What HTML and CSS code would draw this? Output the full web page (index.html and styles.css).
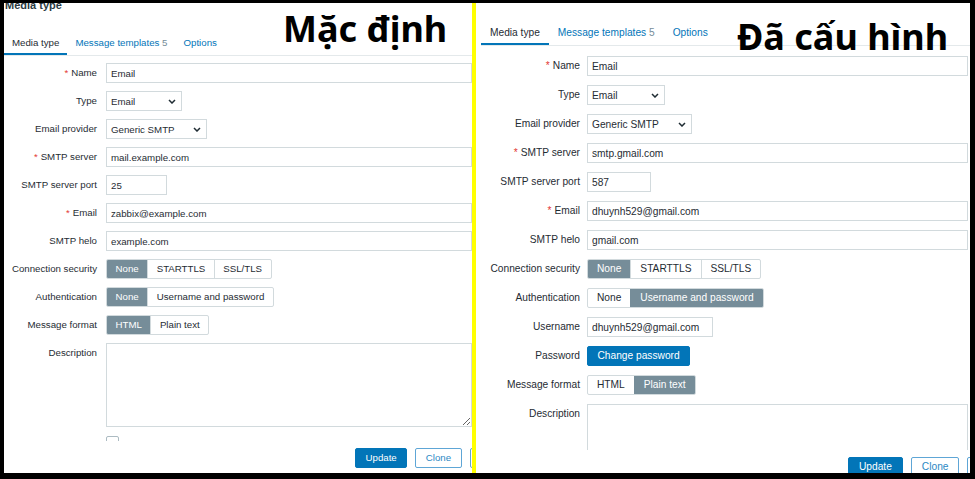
FILE: index.html
```html
<!DOCTYPE html>
<html lang="vi">
<head>
<meta charset="utf-8">
<title>Media type</title>
<link rel="stylesheet" href="styles.css">
</head>
<body>
<div class="frame">
  <section class="panel panel-left">
    <div class="scroll">
      <h1 class="page-title">Media type</h1>
      <ul class="tabs">
        <li class="tab active">Media type</li>
        <li class="tab">Message templates <span class="count">5</span></li>
        <li class="tab">Options</li>
      </ul>
      <div class="form">
        <label class="lbl req">Name</label>
        <input class="input wide" type="text" value="Email">
        <label class="lbl">Type</label>
        <div class="select sel-type"><span>Email</span><svg width="8" height="5" viewBox="0 0 8 5"><path d="M1 1l3 3 3-3" fill="none" stroke="#1f2c33" stroke-width="1.5"/></svg></div>
        <label class="lbl">Email provider</label>
        <div class="select sel-prov"><span>Generic SMTP</span><svg width="8" height="5" viewBox="0 0 8 5"><path d="M1 1l3 3 3-3" fill="none" stroke="#1f2c33" stroke-width="1.5"/></svg></div>
        <label class="lbl req">SMTP server</label>
        <input class="input wide" type="text" value="mail.example.com">
        <label class="lbl">SMTP server port</label>
        <input class="input port" type="text" value="25">
        <label class="lbl req">Email</label>
        <input class="input wide" type="text" value="zabbix@example.com">
        <label class="lbl">SMTP helo</label>
        <input class="input wide" type="text" value="example.com">
        <label class="lbl">Connection security</label>
        <div class="seg"><span class="on">None</span><span>STARTTLS</span><span>SSL/TLS</span></div>
        <label class="lbl">Authentication</label>
        <div class="seg"><span class="on">None</span><span>Username and password</span></div>
        <label class="lbl">Message format</label>
        <div class="seg"><span class="on">HTML</span><span>Plain text</span></div>
        <label class="lbl">Description</label>
        <textarea class="textarea"></textarea>
        <label class="lbl lbl-cb">Enabled</label>
        <span class="checkbox"></span>
      </div>
    </div>
    <div class="footer">
      <button class="btn">Update</button>
      <button class="btn btn-alt">Clone</button>
      <button class="btn btn-alt">Delete</button>
    </div>
    <div class="annot">Mặc định</div>
  </section>
  <div class="divider"></div>
  <section class="panel panel-right">
    <div class="scroll">
      <ul class="tabs">
        <li class="tab active">Media type</li>
        <li class="tab">Message templates <span class="count">5</span></li>
        <li class="tab">Options</li>
      </ul>
      <div class="form">
        <label class="lbl req">Name</label>
        <input class="input wide" type="text" value="Email">
        <label class="lbl">Type</label>
        <div class="select sel-type"><span>Email</span><svg width="8" height="5" viewBox="0 0 8 5"><path d="M1 1l3 3 3-3" fill="none" stroke="#1f2c33" stroke-width="1.5"/></svg></div>
        <label class="lbl">Email provider</label>
        <div class="select sel-prov"><span>Generic SMTP</span><svg width="8" height="5" viewBox="0 0 8 5"><path d="M1 1l3 3 3-3" fill="none" stroke="#1f2c33" stroke-width="1.5"/></svg></div>
        <label class="lbl req">SMTP server</label>
        <input class="input wide" type="text" value="smtp.gmail.com">
        <label class="lbl">SMTP server port</label>
        <input class="input port" type="text" value="587">
        <label class="lbl req">Email</label>
        <input class="input wide" type="text" value="dhuynh529@gmail.com">
        <label class="lbl">SMTP helo</label>
        <input class="input wide" type="text" value="gmail.com">
        <label class="lbl">Connection security</label>
        <div class="seg"><span class="on">None</span><span>STARTTLS</span><span>SSL/TLS</span></div>
        <label class="lbl">Authentication</label>
        <div class="seg"><span>None</span><span class="on">Username and password</span></div>
        <label class="lbl">Username</label>
        <input class="input user" type="text" value="dhuynh529@gmail.com">
        <label class="lbl">Password</label>
        <button class="btn btn-inline">Change password</button>
        <label class="lbl">Message format</label>
        <div class="seg"><span>HTML</span><span class="on">Plain text</span></div>
        <label class="lbl">Description</label>
        <textarea class="textarea"></textarea>
      </div>
    </div>
    <div class="footer">
      <button class="btn">Update</button>
      <button class="btn btn-alt">Clone</button>
      <button class="btn btn-alt">Delete</button>
    </div>
    <div class="annot">Đã cấu hình</div>
  </section>
</div>
</body>
</html>
```
FILE: styles.css
```css
* { box-sizing: border-box; }
html, body { margin: 0; padding: 0; background: #000; }
body {
  width: 975px;
  height: 479px;
  overflow: hidden;
  font-family: "Liberation Sans", Arial, sans-serif;
  color: #1f2c33;
}
.frame {
  display: flex;
  height: 479px;
  padding: 3px 5px 6px 4px;
}
.divider { flex: none; width: 4px; background: #ffff00; }

.panel {
  position: relative;
  flex: none;
  height: 470px;
  background: #fff;
  overflow: hidden;
  display: flex;
  flex-direction: column;
  font-size: var(--fs);
}
.panel-left {
  width: 468px;
  --fs: 9.7px;
  --tabs-mt: 22px;
  --tabs-ml: 0px;
  --tab-px: 8px;
  --lw: 93px;
  --cg: 9px;
  --rg: 8px;
  --fpt: 7px;
  --wide: 366px;
  --scroll-h: 438px;
  --ft-pl: 351px;
  --sp: 8.5px;
  --bp: 9.5px;
}
.panel-right {
  width: 494px;
  --fs: 10.2px;
  --tabs-mt: 20px;
  --tabs-ml: 5px;
  --tab-px: 9px;
  --lw: 104px;
  --cg: 7px;
  --rg: 9px;
  --fpt: 10px;
  --wide: 381px;
  --scroll-h: 447px;
  --ft-pl: 372px;
  --sp: 9px;
  --bp: 10px;
}

.scroll { flex: none; height: var(--scroll-h); overflow: hidden; }

.page-title {
  margin: -4px 0 0 1px;
  height: 12px;
  font-size: 11px;
  line-height: 12px;
  font-weight: bold;
  color: #2b3a42;
}

.tabs {
  list-style: none;
  display: flex;
  margin: var(--tabs-mt) 0 0 var(--tabs-ml);
  padding: 0;
  border-bottom: 1px solid #e4e9eb;
}
.tab {
  padding: 4px var(--tab-px);
  line-height: 12px;
  border-bottom: 2px solid transparent;
  color: #0275b8;
  white-space: nowrap;
}
.tab.active { color: #1f2c33; border-bottom-color: #0275b8; }
.count { color: #768d99; }

.form {
  display: grid;
  grid-template-columns: var(--lw) max-content;
  column-gap: var(--cg);
  row-gap: var(--rg);
  align-items: start;
  justify-items: start;
  padding-top: var(--fpt);
}
.lbl {
  justify-self: end;
  text-align: right;
  line-height: 20px;
  white-space: nowrap;
}
.lbl-cb { line-height: 14px; margin-top: 3px; }
.req::before { content: "*"; color: #e33734; margin-right: 3px; }

.input {
  display: block;
  height: 20px;
  margin: 0;
  padding: 0 4px;
  border: 1px solid #d2dadd;
  border-radius: 0;
  background: #fff;
  font: inherit;
  color: #1f2c33;
  outline: none;
}
.wide { width: var(--wide); }
.panel-left .port { width: 61px; }
.panel-right .port { width: 64px; }
.user { width: 126px; }

.select {
  display: flex;
  align-items: center;
  justify-content: space-between;
  height: 20px;
  padding: 0 5px 0 4px;
  border: 1px solid #d2dadd;
  background: #fff;
}
.panel-left .sel-type { width: 76px; }
.panel-left .sel-prov { width: 101px; }
.panel-right .sel-type { width: 78px; }
.panel-right .sel-prov { width: 105px; }

.seg {
  display: inline-flex;
  height: 20px;
  border: 1px solid #d2dadd;
  border-radius: 2px;
  overflow: hidden;
}
.seg span {
  padding: 0 var(--sp);
  line-height: 18px;
  border-left: 1px solid #d2dadd;
  white-space: nowrap;
}
.seg span:first-child { border-left: 0; }
.seg .on { background: #768d99; color: #fff; border-color: #768d99; }

.textarea {
  display: block;
  width: var(--wide);
  height: 85px;
  margin: 0;
  padding: 3px 4px;
  border: 1px solid #d2dadd;
  border-radius: 0;
  font: inherit;
  background: #fff;
  resize: both;
  outline: none;
}
.panel-left .textarea { height: 84px; }

.checkbox {
  display: block;
  width: 13px;
  height: 13px;
  margin-top: 1px;
  border: 1px solid #acbbc2;
  border-radius: 2px;
  background: #fff;
}

.btn {
  flex: none;
  height: 20px;
  margin: 0;
  padding: 0 var(--bp);
  border: 1px solid #0275b8;
  border-radius: 2px;
  background: #0275b8;
  color: #fff;
  font: inherit;
  line-height: 18px;
  white-space: nowrap;
}
.btn-alt { background: #fff; color: #2c88c4; border-color: #5ea6d6; }
.btn-inline { padding: 0 9.5px; }

.footer {
  flex: none;
  display: flex;
  gap: 8px;
  padding: 7px 0 0 var(--ft-pl);
}

.annot {
  position: absolute;
  font-family: "Noto Sans", "Open Sans", sans-serif;
  font-weight: 700;
  font-size: 36px;
  line-height: 36px;
  color: #000;
  white-space: nowrap;
}
.panel-left .annot { left: 279px; top: 8px; }
.panel-right .annot { left: 261px; top: 16px; }
```
